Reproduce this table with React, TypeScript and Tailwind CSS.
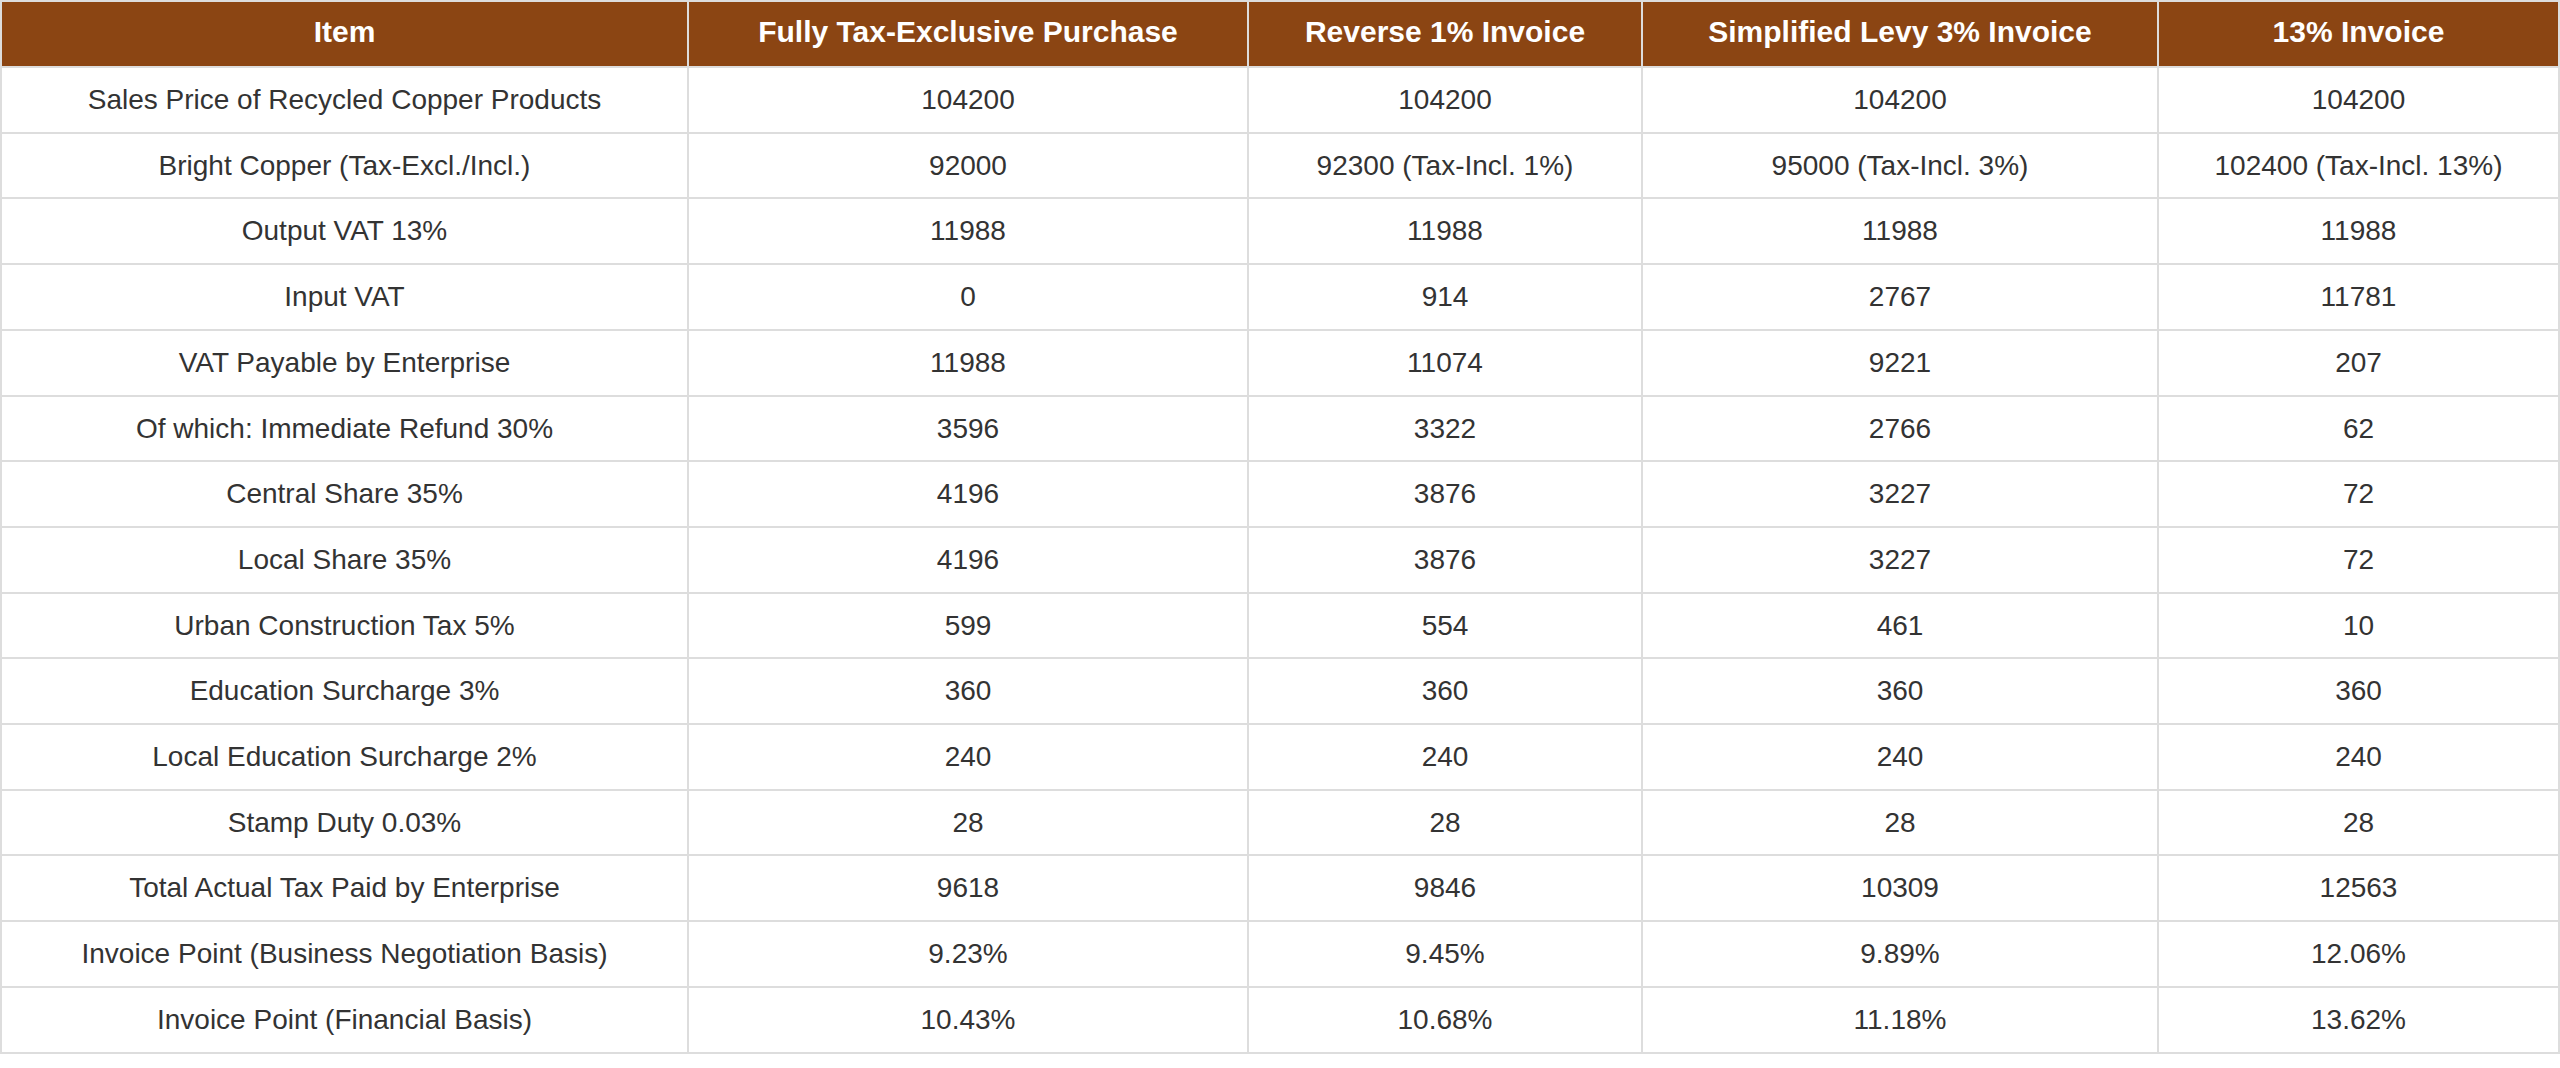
const HEADERS = [
  'Item',
  'Fully Tax-Exclusive Purchase',
  'Reverse 1% Invoice',
  'Simplified Levy 3% Invoice',
  '13% Invoice',
];

const COLS = ['w-[687px]', 'w-[560px]', 'w-[394px]', 'w-[516px]', 'w-[401px]'];

const ROWS: string[][] = [
  ['Sales Price of Recycled Copper Products', '104200', '104200', '104200', '104200'],
  ['Bright Copper (Tax-Excl./Incl.)', '92000', '92300 (Tax-Incl. 1%)', '95000 (Tax-Incl. 3%)', '102400 (Tax-Incl. 13%)'],
  ['Output VAT 13%', '11988', '11988', '11988', '11988'],
  ['Input VAT', '0', '914', '2767', '11781'],
  ['VAT Payable by Enterprise', '11988', '11074', '9221', '207'],
  ['Of which: Immediate Refund 30%', '3596', '3322', '2766', '62'],
  ['Central Share 35%', '4196', '3876', '3227', '72'],
  ['Local Share 35%', '4196', '3876', '3227', '72'],
  ['Urban Construction Tax 5%', '599', '554', '461', '10'],
  ['Education Surcharge 3%', '360', '360', '360', '360'],
  ['Local Education Surcharge 2%', '240', '240', '240', '240'],
  ['Stamp Duty 0.03%', '28', '28', '28', '28'],
  ['Total Actual Tax Paid by Enterprise', '9618', '9846', '10309', '12563'],
  ['Invoice Point (Business Negotiation Basis)', '9.23%', '9.45%', '9.89%', '12.06%'],
  ['Invoice Point (Financial Basis)', '10.43%', '10.68%', '11.18%', '13.62%'],
];

export default function App() {
  return (
    <div className="min-h-screen bg-white font-['Liberation_Sans',Arial,sans-serif]">
      <table className="w-full table-fixed border-collapse border-2 border-[#dddddd]">
        <colgroup>
          {COLS.map((c, i) => (
            <col key={i} className={c} />
          ))}
        </colgroup>
        <thead>
          <tr className="bg-[#8b4513]">
            {HEADERS.map(h => (
              <th
                key={h}
                className="border-2 border-[#dddddd] pt-[13px] pb-[18px] px-3 text-center text-[30px] leading-[33px] font-bold text-white"
              >
                {h}
              </th>
            ))}
          </tr>
        </thead>
        <tbody>
          {ROWS.map(row => (
            <tr key={row[0]}>
              {row.map((cell, i) => (
                <td
                  key={i}
                  className="border-2 border-[#dddddd] py-[16px] px-3 text-center text-[28px] leading-[31.7px] text-[#333333]"
                >
                  {cell}
                </td>
              ))}
            </tr>
          ))}
        </tbody>
      </table>
    </div>
  );
}
